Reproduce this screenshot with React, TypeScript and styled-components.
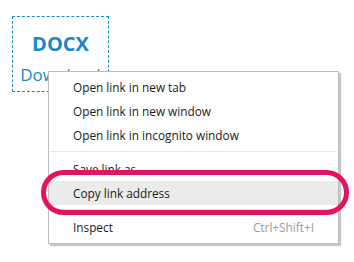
import styled, { createGlobalStyle } from "styled-components";

const GlobalStyle = createGlobalStyle`
  body {
    margin: 0;
    background: #ffffff;
    font-family: "Open Sans", "Noto Sans", sans-serif;
  }
`;

const Page = styled.div`
  position: relative;
  width: 354px;
  height: 262px;
  overflow: hidden;
  background: #ffffff;
`;

const FileCard = styled.div`
  margin: 16px 0 0 12px;
  width: 97px;
  height: 76px;
  box-sizing: border-box;
  border: 1px dashed #1b87c9;
  display: flex;
  flex-direction: column;
  align-items: center;
  color: #1b87c9;
`;

const FileType = styled.div`
  margin-top: 14px;
  font-size: 20px;
  font-weight: 700;
  line-height: 26px;
`;

const FileLink = styled.div`
  margin-top: 6px;
  font-size: 17px;
  line-height: 24px;
`;

const Menu = styled.ul`
  position: absolute;
  left: 48px;
  top: 71px;
  width: 291px;
  box-sizing: border-box;
  margin: 0;
  padding: 3px 0 4px;
  list-style: none;
  background: #ffffff;
  border: 1px solid #bdbdbd;
  box-shadow: 2px 2px 1px rgba(0, 0, 0, 0.22);
  font-size: 11.8px;
  color: #1a1a1a;
`;

const Item = styled.li<{ $active?: boolean }>`
  position: relative;
  height: 24px;
  display: flex;
  align-items: center;
  justify-content: space-between;
  padding: 0 24px;
  background: ${(p) => (p.$active ? "#ebebeb" : "transparent")};
`;

const Shortcut = styled.span`
  color: #9a9a9a;
`;

const Separator = styled.li`
  height: 10px;
  padding-top: 4px;
  box-sizing: border-box;
  &::after {
    content: "";
    display: block;
    margin: 0 1px;
    border-top: 1px solid #e6e6e6;
  }
`;

const Ring = styled.span`
  position: absolute;
  left: -8px;
  right: -11px;
  top: -11px;
  bottom: -10px;
  border: 5px solid #e5135f;
  border-radius: 23px;
  pointer-events: none;
`;

export default function App() {
  return (
    <Page>
      <GlobalStyle />
      <FileCard>
        <FileType>DOCX</FileType>
        <FileLink>Download</FileLink>
      </FileCard>
      <Menu>
        <Item>Open link in new tab</Item>
        <Item>Open link in new window</Item>
        <Item>Open link in incognito window</Item>
        <Separator />
        <Item>Save link as...</Item>
        <Item $active>
          Copy link address
          <Ring />
        </Item>
        <Separator />
        <Item>
          Inspect
          <Shortcut>Ctrl+Shift+I</Shortcut>
        </Item>
      </Menu>
    </Page>
  );
}
